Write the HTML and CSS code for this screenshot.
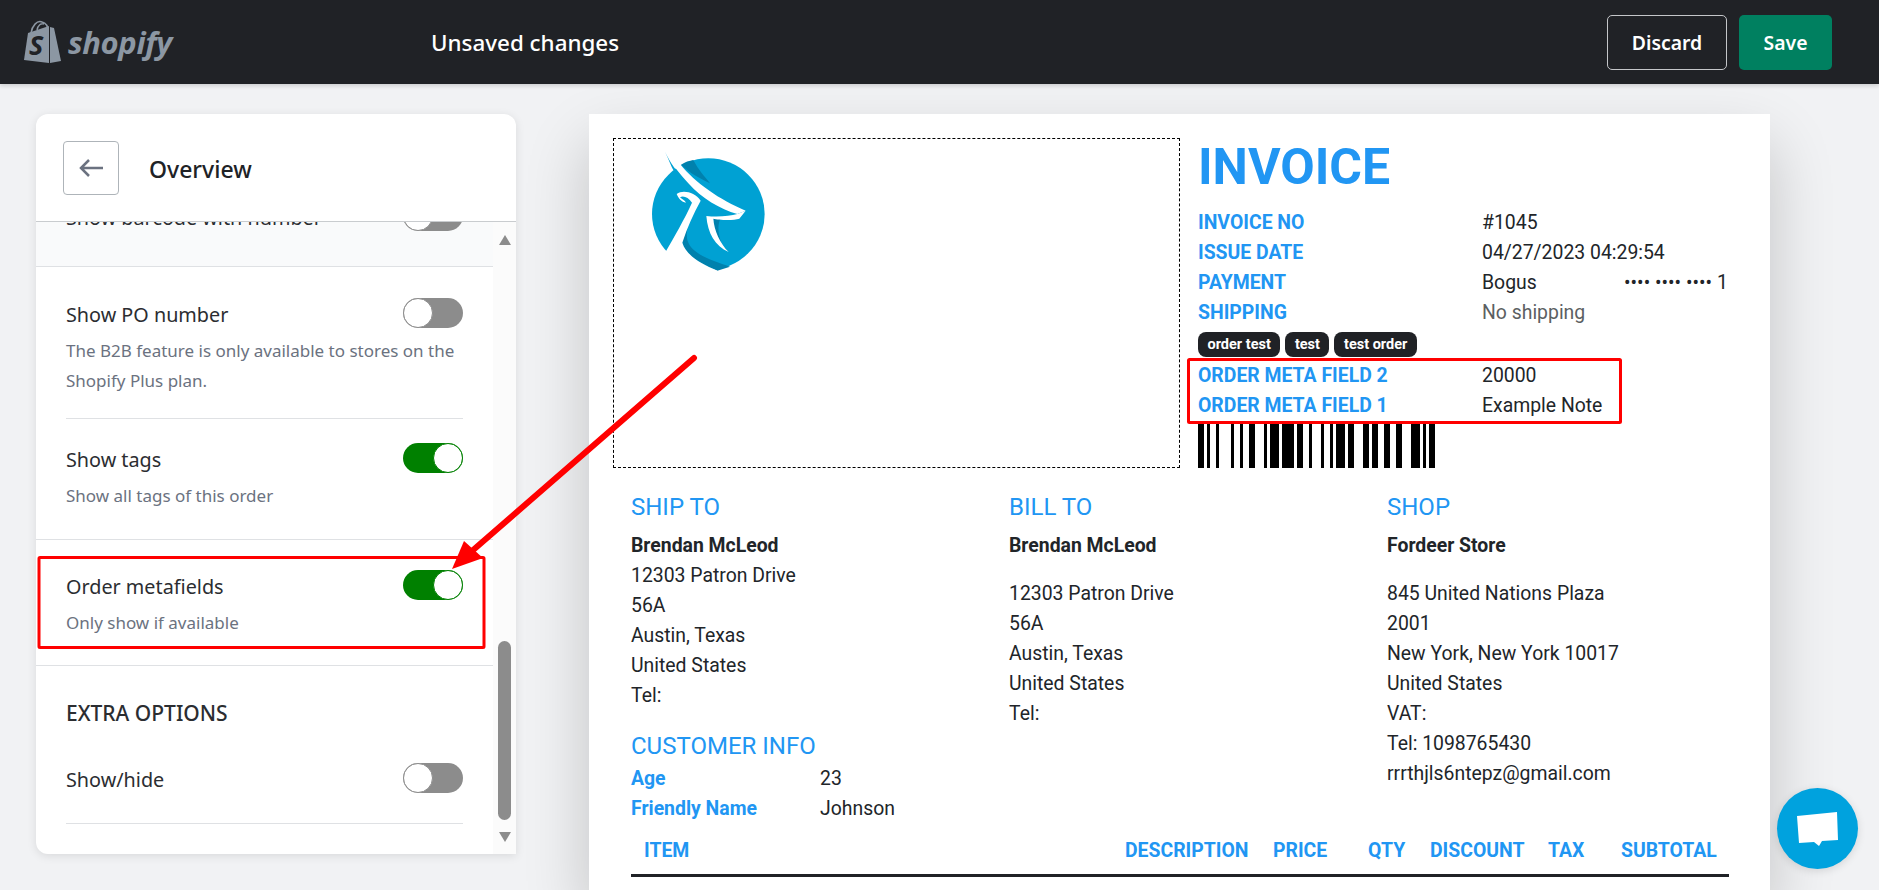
FILE: index.html
```html
<!DOCTYPE html>
<html lang="en">
<head>
    <meta charset="UTF-8">
    <meta name="viewport" content="width=device-width, initial-scale=1.0">
    <title>Invoice template</title>
    <link rel="stylesheet" href="styles.css">
</head>
<body>

<header class="topbar">
    <div class="brand">
        <svg class="brand-bag" viewBox="0 0 40 44" width="40" height="44">
            <path d="M1 40 L5 13 L26 6 L26 43 Z" fill="#8c97a3"/>
            <path d="M27 7 L31 8 L38 41 L27 43 Z" fill="#8c97a3"/>
            <path d="M8 13 C9 6 14 0 19 2 C23 3 25 7 25 11 M14 10 C15 5 18 3 21 4" fill="none" stroke="#8c97a3" stroke-width="1.5"/>
            <text x="6" y="35" class="brand-s">S</text>
        </svg>
        <span class="brand-name">shopify</span>
    </div>
    <div class="topbar-title">Unsaved changes</div>
    <div class="topbar-actions">
        <button type="button" class="btn btn-discard">Discard</button>
        <button type="button" class="btn btn-save">Save</button>
    </div>
</header>

<main class="workspace">
    <aside class="panel">
        <div class="panel-head">
            <button type="button" class="back-btn">
                <svg viewBox="0 0 24 18" width="24" height="18"><path d="M24 9H2M10 1 2 9l8 8" fill="none" stroke="#6b7280" stroke-width="2.5"/></svg>
            </button>
            <h2 class="panel-title">Overview</h2>
        </div>
        <div class="panel-body">
            <div class="settings">
                <div class="setting-clipped">
                    <div class="setting-top">
                        <span class="setting-label">Show barcode with number</span>
                        <span class="toggle"></span>
                    </div>
                </div>

                <div class="setting-group setting-group-po">
                    <div class="setting-top">
                        <span class="setting-label">Show PO number</span>
                        <span class="toggle"></span>
                    </div>
                    <p class="setting-desc">The B2B feature is only available to stores on the Shopify Plus plan.</p>
                </div>
                <div class="setting-group setting-group-tags">
                    <div class="setting-top">
                        <span class="setting-label">Show tags</span>
                        <span class="toggle on"></span>
                    </div>
                    <p class="setting-desc">Show all tags of this order</p>
                </div>
                <div class="setting-block">
                    <div class="setting-top">
                        <span class="setting-label">Order metafields</span>
                        <span class="toggle on"></span>
                    </div>
                    <p class="setting-desc">Only show if available</p>
                </div>
                <div class="setting-extra">
                    <h3 class="extra-title">EXTRA OPTIONS</h3>
                    <div class="setting-top setting-last">
                        <span class="setting-label">Show/hide</span>
                        <span class="toggle"></span>
                    </div>
                </div>
            </div>
            <div class="scrollbar">
                <span class="arrow-up"></span>
                <span class="thumb"></span>
                <span class="arrow-down"></span>
            </div>
        </div>
    </aside>

    <section class="sheet">
        <div class="sheet-top">
            <div class="logo-box">
                <svg class="logo" viewBox="0 0 450 420" width="150" height="140">
                    <ellipse cx="235" cy="222" rx="169" ry="167" fill="#00a1d3"/>
                    <!-- dark folds -->
                    <path d="M153 74C165 66 178 62 190 60C205 90 225 110 240 130C210 115 180 100 153 74Z" fill="#0081ad"/>
                    <path d="M178 245C165 270 158 290 157 308C168 345 210 370 262 392L300 380C250 362 185 345 172 300C168 280 172 262 178 245Z" fill="#0081ad"/>
                    <path d="M250 236L270 238C262 260 265 285 275 310C260 290 252 265 250 236Z" fill="#0081ad"/>
                    <!-- white strokes -->
                    <path d="M105 35L150 72C195 128 270 180 347 212L322 222C270 208 215 175 175 130C150 100 125 75 105 35Z" fill="#fff"/>
                    <path d="M347 212L328 236C310 242 265 240 250 236C252 270 270 310 296 336C255 318 233 280 229 228C265 232 300 228 322 222Z" fill="#fff"/>
                    <path d="M140 162C160 148 195 158 212 182C190 222 172 262 157 308C168 345 210 370 262 392L262 400L40 400L40 338L107 335C130 295 165 235 186 188C175 172 160 166 150 172C155 178 165 180 168 188C155 186 145 175 140 162Z" fill="#fff"/>
                    <!-- horn -->
                    <path d="M105 35C118 62 122 75 130 90L165 120C140 95 122 70 105 35Z" fill="#00a1d3"/>
                </svg>
            </div>
            <div class="summary">
                <h1 class="invoice-title">INVOICE</h1>
                <div class="info-row"><span class="info-label">INVOICE NO</span><span>#1045</span></div>
                <div class="info-row"><span class="info-label">ISSUE DATE</span><span>04/27/2023 04:29:54</span></div>
                <div class="info-row"><span class="info-label">PAYMENT</span><span class="pay-method">Bogus</span><span class="card-no">•••• •••• •••• 1</span></div>
                <div class="info-row"><span class="info-label">SHIPPING</span><span class="muted">No shipping</span></div>
                <div class="chips">
                    <span class="chip">order test</span>
                    <span class="chip">test</span>
                    <span class="chip">test order</span>
                </div>
                <div class="meta-rows">
                    <div class="info-row"><span class="info-label">ORDER META FIELD 2</span><span>20000</span></div>
                    <div class="info-row"><span class="info-label">ORDER META FIELD 1</span><span>Example Note</span></div>
                </div>
                <svg class="barcode" viewBox="0 0 237 47" width="237" height="47">
                    <path d="M0 0h6v47H0zM9 0h3v47H9zM18 0h3v47h-3zM33 0h3v47h-3zM42 0h3v47h-3zM51 0h6v47h-6zM66 0h3v47h-3zM72 0h9v47h-9zM84 0h12v47H84zM99 0h6v47h-6zM111 0h3v47h-3zM123 0h3v47h-3zM132 0h3v47h-3zM138 0h9v47h-9zM150 0h6v47h-6zM165 0h6v47h-6zM174 0h6v47h-6zM186 0h6v47h-6zM198 0h6v47h-6zM213 0h9v47h-9zM225 0h3v47h-3zM231 0h6v47h-6z" fill="#000"/>
                </svg>
            </div>
        </div>

        <div class="addresses">
            <div class="address">
                <h3 class="address-title">SHIP TO</h3>
                <div class="line strong">Brendan McLeod</div>
                <div class="line">12303 Patron Drive</div>
                <div class="line">56A</div>
                <div class="line">Austin, Texas</div>
                <div class="line">United States</div>
                <div class="line">Tel:</div>
                <h3 class="address-title customer-title">CUSTOMER INFO</h3>
                <div class="customer-row"><span class="customer-label">Age</span><span>23</span></div>
                <div class="customer-row"><span class="customer-label">Friendly Name</span><span>Johnson</span></div>
            </div>
            <div class="address">
                <h3 class="address-title">BILL TO</h3>
                <div class="line strong name-gap">Brendan McLeod</div>
                <div class="line">12303 Patron Drive</div>
                <div class="line">56A</div>
                <div class="line">Austin, Texas</div>
                <div class="line">United States</div>
                <div class="line">Tel:</div>
            </div>
            <div class="address">
                <h3 class="address-title">SHOP</h3>
                <div class="line strong name-gap">Fordeer Store</div>
                <div class="line">845 United Nations Plaza</div>
                <div class="line">2001</div>
                <div class="line">New York, New York 10017</div>
                <div class="line">United States</div>
                <div class="line">VAT:</div>
                <div class="line">Tel: 1098765430</div>
                <div class="line">rrrthjls6ntepz@gmail.com</div>
            </div>
        </div>

        <div class="items-head">
            <span class="col-item">ITEM</span>
            <span>DESCRIPTION</span>
            <span>PRICE</span>
            <span>QTY</span>
            <span>DISCOUNT</span>
            <span>TAX</span>
            <span>SUBTOTAL</span>
        </div>
    </section>
</main>

<!-- red annotations drawn over the screenshot -->
<svg class="annotations" viewBox="0 0 1879 890" width="1879" height="890">
    <rect x="39" y="557.5" width="445" height="90" rx="1" fill="none" stroke="#f00" stroke-width="3"/>
    <rect x="1188.5" y="359.5" width="432" height="63" rx="1" fill="none" stroke="#f00" stroke-width="3"/>
    <line x1="694" y1="358" x2="472" y2="551" stroke="#f00" stroke-width="6" stroke-linecap="round"/>
    <polygon points="452,569 464,541 483,558" fill="#f00"/>
</svg>

<div class="chat-bubble">
    <svg viewBox="0 0 41 34" width="41" height="34"><path d="M0 4 40 0 41 28 25 29 22 34 17 30 2 31Z" fill="#fff"/></svg>
</div>

</body>
</html>
```
FILE: styles.css
```css
html, body {
    height: 100%;
}

body {
    margin: 0;
    overflow: hidden;
    background-color: #f1f2f4;
    color: #202226;
    font-family: "Noto Sans", sans-serif;
}

h1, h2, h3, p {
    margin: 0;
}

/* Top bar */
.topbar {
    position: relative;
    z-index: 2;
    display: flex;
    align-items: center;
    height: 84px;
    background-color: #202226;
    box-shadow: 0 2px 4px rgba(0, 0, 0, 0.15);
}

.brand {
    display: flex;
    align-items: center;
    width: 431px;
    padding-left: 23px;
    box-sizing: border-box;
}

.brand-bag {
    flex: none;
}

.brand-s {
    font-family: "Open Sans", sans-serif;
    font-size: 27px;
    font-weight: 700;
    font-style: italic;
    fill: #202226;
}

.brand-name {
    margin-left: 5px;
    font-family: "Open Sans", sans-serif;
    font-size: 31px;
    font-weight: 700;
    font-style: italic;
    letter-spacing: -0.4px;
    color: #8c97a3;
}

.topbar-title {
    font-size: 22.4px;
    font-weight: 500;
    color: #fff;
}

.topbar-actions {
    display: flex;
    gap: 12px;
    margin-left: auto;
    padding-right: 47px;
}

.btn {
    height: 55px;
    border-radius: 5px;
    font-family: "Noto Sans", sans-serif;
    font-size: 19.4px;
    font-weight: 600;
    color: #fff;
    cursor: pointer;
}

.btn-discard {
    width: 120px;
    border: 1px solid #c4c6c9;
    background-color: transparent;
}

.btn-save {
    width: 93px;
    border: none;
    background-color: #008060;
}

/* Layout under the bar */
.workspace {
    display: flex;
    align-items: flex-start;
    padding: 30px 0 0 36px;
}

/* Settings panel */
.panel {
    flex: none;
    width: 480px;
    height: 740px;
    background-color: #fff;
    border-radius: 12px 12px 0 12px;
    box-shadow: 0 2px 10px rgba(0, 0, 0, 0.1);
    overflow: hidden;
}

.panel-head {
    display: flex;
    align-items: center;
    gap: 30px;
    height: 107px;
    padding-left: 27px;
    border-bottom: 1px solid #c9cccf;
}

.back-btn {
    display: flex;
    align-items: center;
    justify-content: center;
    width: 56px;
    height: 54px;
    padding: 0;
    background-color: #fff;
    border: 1px solid #aeb4b9;
    border-radius: 4px;
}

.panel-title {
    padding-top: 2px;
    font-size: 23px;
    font-weight: 500;
}

.panel-body {
    display: flex;
    height: 632px;
}

.settings {
    width: 457px;
    overflow: hidden;
}

.setting-clipped {
    display: flow-root;
    height: 44px;
    padding: 0 30px;
    background-color: #f9fafb;
    border-bottom: 1px solid #dfe1e4;
}

.setting-clipped .setting-top {
    margin-top: -21px;
}

.setting-top {
    display: flex;
    align-items: center;
    justify-content: space-between;
    height: 30px;
}

.setting-label {
    font-size: 19.8px;
    color: #2b2d31;
    padding-top: 2px;
}

.setting-desc {
    margin-top: 8px;
    font-size: 17px;
    line-height: 30px;
    color: #6b7280;
}

.setting-group {
    margin: 0 30px;
}

.setting-group-po {
    padding: 31px 0 22px;
    border-bottom: 1px solid #dfe1e4;
}

.setting-group-tags {
    padding-top: 24px;
    height: 96px;
}

.setting-block {
    padding: 30px 30px 0;
    height: 95px;
    border-top: 1px solid #dfe1e4;
    border-bottom: 1px solid #dfe1e4;
}

.setting-extra {
    padding: 32px 30px 0;
}

.extra-title {
    font-size: 21px;
    font-weight: 500;
    line-height: 30px;
    color: #2b2d31;
}

.setting-last {
    margin-top: 35px;
    padding-bottom: 30px;
    border-bottom: 1px solid #dfe1e4;
}

/* toggle switch */
.toggle {
    position: relative;
    flex: none;
    display: block;
    width: 60px;
    height: 30px;
    box-sizing: border-box;
    background-color: #8c8c8c;
    border-radius: 15px;
}

.toggle::after {
    content: "";
    position: absolute;
    top: 0;
    left: 0;
    width: 30px;
    height: 30px;
    box-sizing: border-box;
    background-color: #fff;
    border: 1px solid #8c8c8c;
    border-radius: 50%;
}

.toggle.on {
    background-color: #008000;
}

.toggle.on::after {
    left: 30px;
    border-color: #008000;
}

/* fake scrollbar */
.scrollbar {
    display: flex;
    flex-direction: column;
    align-items: center;
    width: 23px;
    background-color: #fbfbfb;
}

.arrow-up {
    margin-top: 13px;
    border: 6px solid transparent;
    border-top: none;
    border-bottom: 10px solid #8c8c8c;
}

.thumb {
    width: 13px;
    height: 179px;
    margin-top: auto;
    background-color: #8c8c8c;
    border-radius: 7px;
}

.arrow-down {
    margin: 12px 0 12px;
    border: 6px solid transparent;
    border-bottom: none;
    border-top: 10px solid #8c8c8c;
}

/* Invoice sheet */
.sheet {
    flex: none;
    width: 1181px;
    height: 776px;
    margin-left: 73px;
    padding: 24px 41px 0 24px;
    box-sizing: border-box;
    background-color: #fff;
    box-shadow: 0 30px 60px rgba(0, 0, 0, 0.2);
    font-family: Roboto, sans-serif;
    font-size: 19.4px;
    line-height: 32px;
    color: #212529;
}

.sheet-top {
    display: flex;
}

.logo-box {
    flex: none;
    width: 567px;
    height: 330px;
    box-sizing: border-box;
    padding: 1px 0 0 16px;
    border: 1px dashed #000;
}

.logo {
    display: block;
}

.summary {
    margin-left: 18px;
    flex: 1;
}

.invoice-title {
    height: 58px;
    margin-bottom: 11px;
    font-size: 50px;
    font-weight: 700;
    line-height: 58px;
    color: #2196f3;
}

.info-row {
    display: flex;
    height: 30px;
}

.info-label {
    width: 284px;
    font-weight: 700;
    color: #2196f3;
}

.pay-method {
    width: 142px;
}

.muted {
    color: #5c5f62;
}

.chips {
    display: flex;
    gap: 5px;
    margin: 5px 0 3px;
}

.chip {
    height: 25px;
    padding: 0 9.5px;
    background-color: #202226;
    border-radius: 8px;
    font-size: 14.5px;
    font-weight: 700;
    line-height: 25px;
    color: #fff;
}

.barcode {
    display: block;
    margin-top: 1px;
}

.addresses {
    display: flex;
    margin-top: 24px;
    padding-left: 18px;
}

.address {
    flex: none;
    width: 378px;
}

.address-title {
    margin-bottom: 8px;
    font-size: 24px;
    font-weight: 400;
    line-height: 30px;
    color: #2196f3;
}

.line {
    height: 30px;
}

.strong {
    font-weight: 700;
}

.name-gap {
    margin-bottom: 18px;
}

.customer-title {
    margin: 21px 0 2px;
}

.customer-row {
    display: flex;
    height: 30px;
}

.customer-label {
    width: 189px;
    font-weight: 700;
    color: #2196f3;
}

.items-head {
    display: grid;
    grid-template-columns: 494px 148px 95px 62px 118px 73px 1fr;
    height: 39px;
    margin: 12px 0 0 18px;
    border-bottom: 3px solid #202226;
    font-weight: 700;
    color: #2196f3;
}

.col-item {
    padding-left: 13px;
}

/* Overlays */
.annotations {
    position: absolute;
    top: 0;
    left: 0;
    z-index: 3;
    pointer-events: none;
}

.chat-bubble {
    position: absolute;
    top: 788px;
    left: 1777px;
    z-index: 4;
    display: flex;
    align-items: center;
    justify-content: center;
    width: 81px;
    height: 81px;
    background-color: #00a2de;
    border-radius: 50%;
    box-shadow: 0 2px 8px rgba(0, 0, 0, 0.12);
}
```
